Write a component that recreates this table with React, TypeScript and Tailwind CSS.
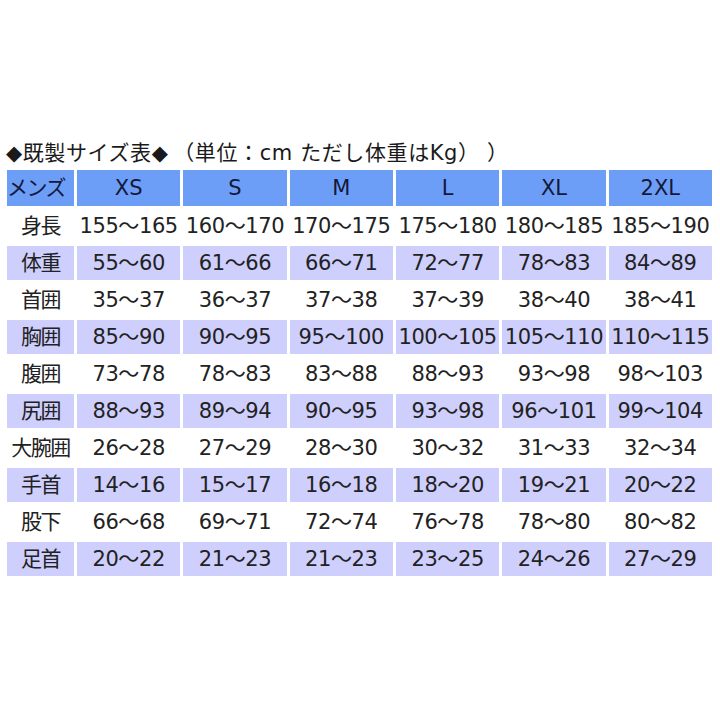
const sizes = ["XS", "S", "M", "L", "XL", "2XL"]

const rows: [string, string[]][] = [
  ["身長", ["155～165", "160～170", "170～175", "175～180", "180～185", "185～190"]],
  ["体重", ["55～60", "61～66", "66～71", "72～77", "78～83", "84～89"]],
  ["首囲", ["35～37", "36～37", "37～38", "37～39", "38～40", "38～41"]],
  ["胸囲", ["85～90", "90～95", "95～100", "100～105", "105～110", "110～115"]],
  ["腹囲", ["73～78", "78～83", "83～88", "88～93", "93～98", "98～103"]],
  ["尻囲", ["88～93", "89～94", "90～95", "93～98", "96～101", "99～104"]],
  ["大腕囲", ["26～28", "27～29", "28～30", "30～32", "31～33", "32～34"]],
  ["手首", ["14～16", "15～17", "16～18", "18～20", "19～21", "20～22"]],
  ["股下", ["66～68", "69～71", "72～74", "76～78", "78～80", "80～82"]],
  ["足首", ["20～22", "21～23", "21～23", "23～25", "24～26", "27～29"]],
]

export default function App() {
  return (
    <div className="w-[720px] h-[720px] bg-white pt-[139px] font-['DejaVu_Sans','Noto_Sans_CJK_JP',sans-serif] text-[#222]">
      <div className="pl-[6px] text-[21px] leading-[28px] tracking-[0.6px] text-[#1a1a1a] whitespace-nowrap">
        ◆既製サイズ表◆&thinsp;（単位：cm ただし体重はKg）&nbsp;）
      </div>
      <table className="ml-[4px] border-separate border-spacing-[3px] table-fixed w-[711px]">
        <colgroup>
          <col className="w-[67px]" />
          {sizes.map((s) => (
            <col key={s} />
          ))}
        </colgroup>
        <thead>
          <tr className="h-[36px] bg-[#6d9ef7] text-[#14183a]">
            <th className="p-0 pt-[1px] text-[21px] font-normal text-left tracking-[-1.5px]">メンズ</th>
            {sizes.map((s) => (
              <th key={s} className="p-0 pt-[1px] text-[21px] font-normal text-center">
                {s}
              </th>
            ))}
          </tr>
        </thead>
        <tbody>
          {rows.map(([label, vals], i) => (
            <tr key={label} className={`h-[34px] ${i % 2 === 1 ? "bg-[#cfcffd]" : "bg-white"}`}>
              <td className="p-0 pt-[2px] text-[21px] text-center whitespace-nowrap tracking-[-1.5px]">{label}</td>
              {vals.map((v, j) => (
                <td key={j} className="p-0 pt-[2px] text-[21px] text-center whitespace-nowrap tracking-[-0.4px]">
                  {v}
                </td>
              ))}
            </tr>
          ))}
        </tbody>
      </table>
    </div>
  )
}
